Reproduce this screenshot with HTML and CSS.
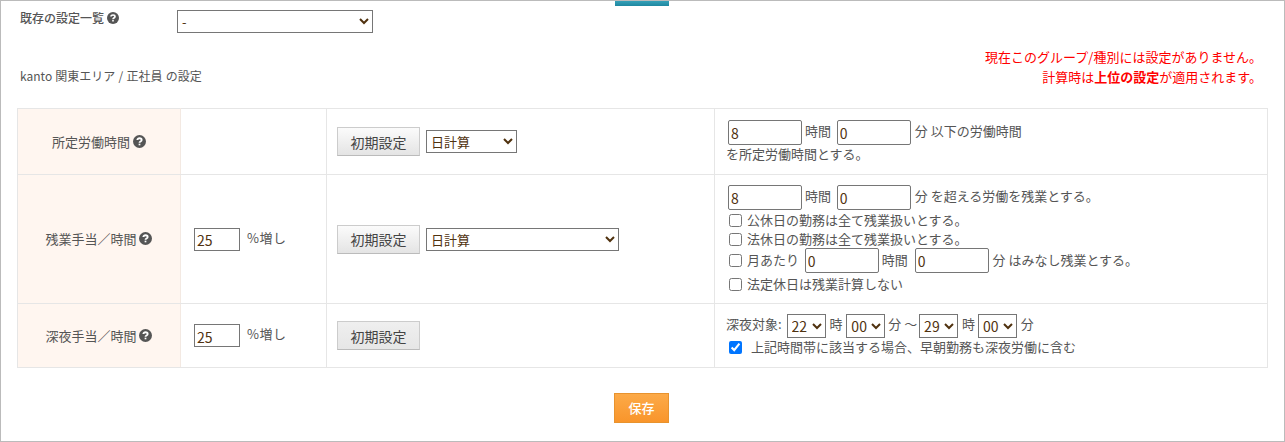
FILE: index.html
```html
<!DOCTYPE html>
<html lang="ja">
<head>
<meta charset="utf-8">
<title>設定</title>
<link rel="stylesheet" href="styles.css">
</head>
<body>
<div class="panel">
  <div class="tab"></div>
  <div class="head">
    <div class="head-left">
      <div class="existing">
        <span class="existing-label">既存の設定一覧 <svg class="help" viewBox="0 0 12 12"><circle cx="6" cy="6" r="6"/><path class="q" d="M4 4.6C4 3.5 4.9 3 6 3s2 .6 2 1.6c0 1.5-2 1.4-2 2.6"/><rect class="qd" x="5.2" y="8" width="1.6" height="1.5"/></svg></span>
        <select class="sel sel-existing"><option>-</option></select>
      </div>
      <div class="scope">kanto 関東エリア / 正社員 の設定</div>
    </div>
    <div class="notice">現在このグループ/種別には設定がありません。<br>計算時は<b>上位の設定</b>が適用されます。</div>
  </div>
  <table class="grid">
    <colgroup><col class="c1"><col class="c2"><col class="c3"><col class="c4"></colgroup>
    <tr class="r1">
      <th>所定労働時間 <svg class="help" viewBox="0 0 12 12"><circle cx="6" cy="6" r="6"/><path class="q" d="M4 4.6C4 3.5 4.9 3 6 3s2 .6 2 1.6c0 1.5-2 1.4-2 2.6"/><rect class="qd" x="5.2" y="8" width="1.6" height="1.5"/></svg></th>
      <td></td>
      <td class="pad3"><button class="btn">初期設定</button> <select class="sel sel-short"><option>日計算</option></select></td>
      <td class="pad4 cell-a">
        <div class="line"><input class="inp wide" value="8"> 時間 <input class="inp wide" value="0"> 分 以下の労働時間</div>
        <div class="line plain">を所定労働時間とする。</div>
      </td>
    </tr>
    <tr class="r2">
      <th>残業手当／時間 <svg class="help" viewBox="0 0 12 12"><circle cx="6" cy="6" r="6"/><path class="q" d="M4 4.6C4 3.5 4.9 3 6 3s2 .6 2 1.6c0 1.5-2 1.4-2 2.6"/><rect class="qd" x="5.2" y="8" width="1.6" height="1.5"/></svg></th>
      <td class="pad2"><input class="inp narrow" value="25"><span class="pct">%増し</span></td>
      <td class="pad3"><button class="btn">初期設定</button> <select class="sel sel-long"><option>日計算</option></select></td>
      <td class="pad4 cell-b">
        <div class="line first"><input class="inp wide" value="8"> 時間 <input class="inp wide" value="0"> 分 を超える労働を残業とする。</div>
        <label class="check"><input type="checkbox"> 公休日の勤務は全て残業扱いとする。</label>
        <label class="check"><input type="checkbox"> 法休日の勤務は全て残業扱いとする。</label>
        <div class="check tall"><input type="checkbox"> 月あたり <input class="inp wide" value="0"> 時間 <input class="inp wide" value="0"> 分 はみなし残業とする。</div>
        <label class="check"><input type="checkbox"> 法定休日は残業計算しない</label>
      </td>
    </tr>
    <tr class="r3">
      <th>深夜手当／時間 <svg class="help" viewBox="0 0 12 12"><circle cx="6" cy="6" r="6"/><path class="q" d="M4 4.6C4 3.5 4.9 3 6 3s2 .6 2 1.6c0 1.5-2 1.4-2 2.6"/><rect class="qd" x="5.2" y="8" width="1.6" height="1.5"/></svg></th>
      <td class="pad2"><input class="inp narrow" value="25"><span class="pct">%増し</span></td>
      <td class="pad3"><button class="btn flat">初期設定</button></td>
      <td class="pad4 cell-c">
        <div class="line">深夜対象: <select class="sel sel-time t1"><option>22</option></select> 時 <select class="sel sel-time t2"><option>00</option></select> 分 ～ <select class="sel sel-time t3"><option>29</option></select> 時 <select class="sel sel-time t4"><option>00</option></select> 分</div>
        <label class="check late"><input type="checkbox" checked> 上記時間帯に該当する場合、早朝勤務も深夜労働に含む</label>
      </td>
    </tr>
  </table>
  <div class="actions"><button class="save">保存</button></div>
</div>
</body>
</html>
```
FILE: styles.css
```css
* { box-sizing: border-box; }
html, body { margin: 0; padding: 0; background: #fff; }
body {
  font-family: "Noto Sans CJK JP", "Noto Sans", sans-serif;
  font-size: 13px;
  line-height: 18px;
  color: #555;
}
.panel {
  position: relative;
  width: 1285px;
  height: 442px;
  border: 1px solid #bbb;
  padding: 0 16px;
  overflow: hidden;
}
.tab {
  position: absolute;
  left: 614px;
  top: 0;
  width: 54px;
  height: 5px;
  background: linear-gradient(#35a0b8, #1f87a0);
}
.head { display: flex; justify-content: space-between; height: 107px; }
.head-left { padding: 0 0 0 3px; }
.existing { display: flex; align-items: flex-start; height: 58px; padding-top: 9px; }
.existing-label { width: 157px; font-size: 12px; font-weight: 500; line-height: 16px; }
.scope { font-size: 12px; line-height: 18px; margin-top: 8px; word-spacing: .5px; }
.help { width: 13px; height: 13px; vertical-align: -1px; }
.existing-label .help { width: 12px; height: 12px; }
.help circle { fill: #555; }
.help .q { fill: none; stroke: #fff; stroke-width: 1.7; }
.help .qd { fill: #fff; }
.notice {
  color: #f00;
  font-size: 13px;
  line-height: 20px;
  text-align: right;
  padding: 46px 6px 0 0;
}
.notice b { font-weight: 700; }
.grid { border-collapse: collapse; table-layout: fixed; width: 1250px; }
.c1 { width: 163px; } .c2 { width: 146px; } .c3 { width: 388px; } .c4 { width: 553px; }
.grid th, .grid td { border: 1px solid #e6e6e6; padding: 0; vertical-align: middle; }
.grid th { background: #fff6f0; font-weight: 400; font-size: 13px; text-align: center; border-right-color: #f3e9e2; }
.r1 { height: 66px; } .r2 { height: 129px; } .r3 { height: 64px; }
.grid .pad2 { padding-left: 13px; }
.grid .pad3 { padding-left: 10px; }
.grid .pad4 { padding-left: 11px; }
.grid .cell-a { padding-bottom: 3px; }
.grid .cell-b { padding-bottom: 2px; }
.grid .cell-c { padding-bottom: 5px; }
.inp {
  border: 1px solid #767676;
  border-radius: 2px;
  height: 25px;
  padding: 2px 2px 0;
  font: inherit;
  font-size: 14px;
  color: #50320f;
  vertical-align: middle;
  background: #fff;
}
.wide { width: 74px; margin-left: 2px; }
.wide ~ .wide { margin-left: 3px; margin-right: 1px; }
.narrow { width: 46px; height: 23px; border-radius: 0; margin-right: 7px; }
.pct { letter-spacing: .5px; }
.line { font-size: 13px; line-height: 27px; }
.plain { line-height: 18px; }
.first { margin-top: -1px; }
.check { display: block; font-size: 13px; line-height: 19px; padding-left: 3px; }
.check input[type=checkbox] { width: 13px; height: 13px; margin: 0 2px 0 0; vertical-align: -2px; }
.check.tall { line-height: 27px; margin-top: -2px; margin-bottom: 1px; }
.check.tall .wide { margin-left: 3px; }
.check.tall .wide ~ .wide { margin-left: 4px; margin-right: 1px; }
.check.late { margin-top: -1px; }
.check.late input { margin-right: 6px; }
.btn {
  width: 83px;
  height: 29px;
  border: 1px solid #ccc;
  border-bottom-color: #bbb;
  background: linear-gradient(#fbfbfb, #e4e4e4);
  font: inherit;
  font-size: 14px;
  color: #444;
  vertical-align: middle;
  padding: 0;
  margin-right: 3px;
}
.btn.flat { background: linear-gradient(#efefef, #e6e6e6); }
.sel {
  font-family: inherit;
  font-size: 13px;
  color: #50320f;
  background: #fff;
  border: 1px solid #767676;
  border-radius: 0;
  height: 23px;
  vertical-align: middle;
  padding: 0;
}
.sel-existing { width: 196px; height: 23px; }
.sel-short { width: 91px; }
.sel-long { width: 193px; }
.sel-time { width: 39px; height: 24px; font-size: 14px; }
.t1 { margin: 0 1px 0 2px; }
.t2 { margin: 0 0 0 1px; }
.t3 { margin: 0 1px 0 -1px; }
.t4 { margin: 0 1px 0 0; }
.actions { text-align: center; padding-top: 25px; }
.save {
  width: 55px;
  height: 30px;
  border: 1px solid #e8932e;
  background: linear-gradient(#fcaa48, #f9952b);
  color: #fff;
  font: inherit;
  font-size: 13px;
  font-weight: 500;
  padding: 0;
  margin-right: 2px;
}
```
